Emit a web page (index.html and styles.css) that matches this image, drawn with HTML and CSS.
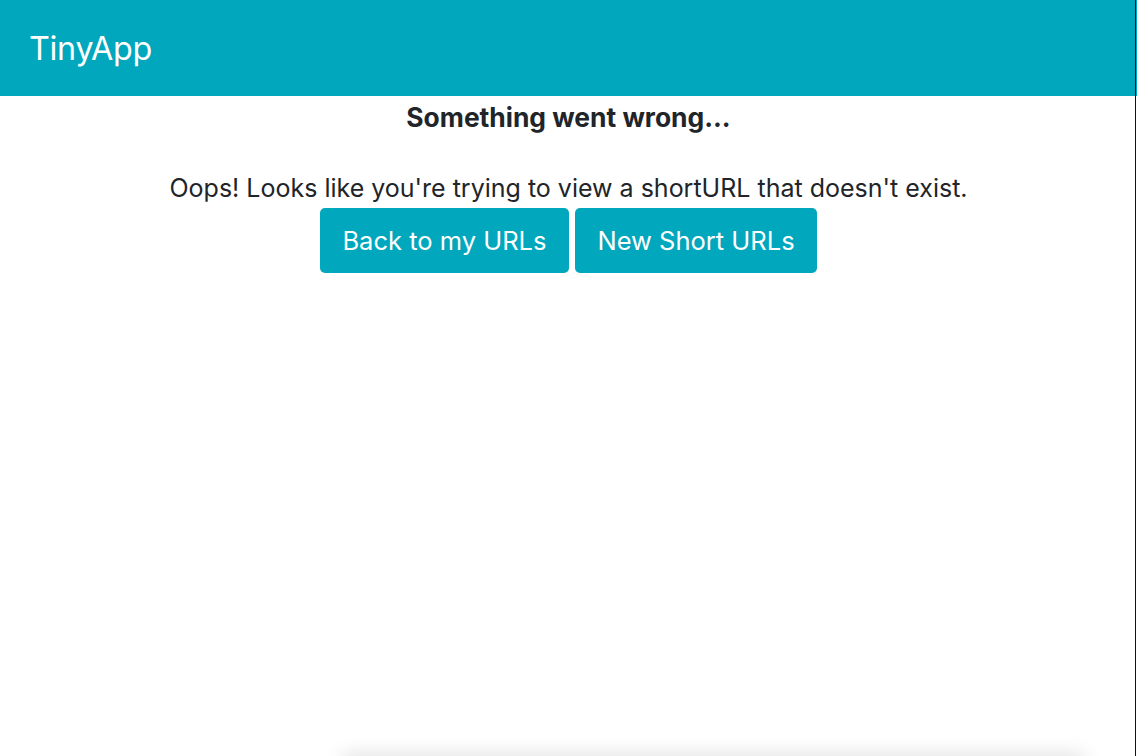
FILE: index.html
```html
<!DOCTYPE html>
<html lang="en">
<head>
<meta charset="utf-8">
<title>TinyApp</title>
<link rel="stylesheet" href="styles.css">
</head>
<body>
<nav class="navbar">
  <a class="brand" href="#">TinyApp</a>
</nav>
<main class="content">
  <h3 class="title">Something went wrong...</h3>
  <p class="message">Oops! Looks like you're trying to view a shortURL that doesn't exist.</p>
  <div class="actions">
    <a class="btn" href="#">Back to my URLs</a>
    <a class="btn" href="#">New Short URLs</a>
  </div>
</main>
<div class="edge"></div>
<div class="shade"></div>
</body>
</html>
```

FILE: styles.css
```css
html, body {
  margin: 0;
  padding: 0;
  height: 100%;
  background: #ffffff;
  font-family: Inter, "Noto Sans", "Liberation Sans", sans-serif;
  color: #212529;
}

.navbar {
  height: 96px;
  background: #00a7bd;
  display: flex;
  align-items: center;
  padding: 0 29px;
  box-sizing: border-box;
}

.brand {
  color: #ffffff;
  text-decoration: none;
  font-size: 32.3px;
  font-weight: 400;
  letter-spacing: -0.3px;
}

.content {
  display: flex;
  flex-direction: column;
  align-items: center;
  text-align: center;
}

.title {
  margin: 6px 0 0;
  font-size: 26.4px;
  font-weight: 700;
  line-height: 30px;
}

.message {
  margin: 41px 0 0;
  font-size: 25px;
  line-height: 30px;
}

.actions {
  display: flex;
  gap: 6px;
  margin-top: 5px;
}

.btn {
  display: flex;
  align-items: center;
  justify-content: center;
  height: 65px;
  padding: 0 22.5px;
  box-sizing: border-box;
  background: #00a7bd;
  color: #ffffff;
  text-decoration: none;
  font-size: 25.5px;
  border-radius: 5px;
}

.edge {
  position: fixed;
  top: 0;
  right: 1px;
  width: 1px;
  height: 100%;
  background: #111;
}

.shade {
  position: fixed;
  left: 340px;
  right: 50px;
  bottom: -20px;
  height: 20px;
  box-shadow: 0 -4px 18px rgba(0,0,0,0.10);
  border-radius: 30px;
}
```
